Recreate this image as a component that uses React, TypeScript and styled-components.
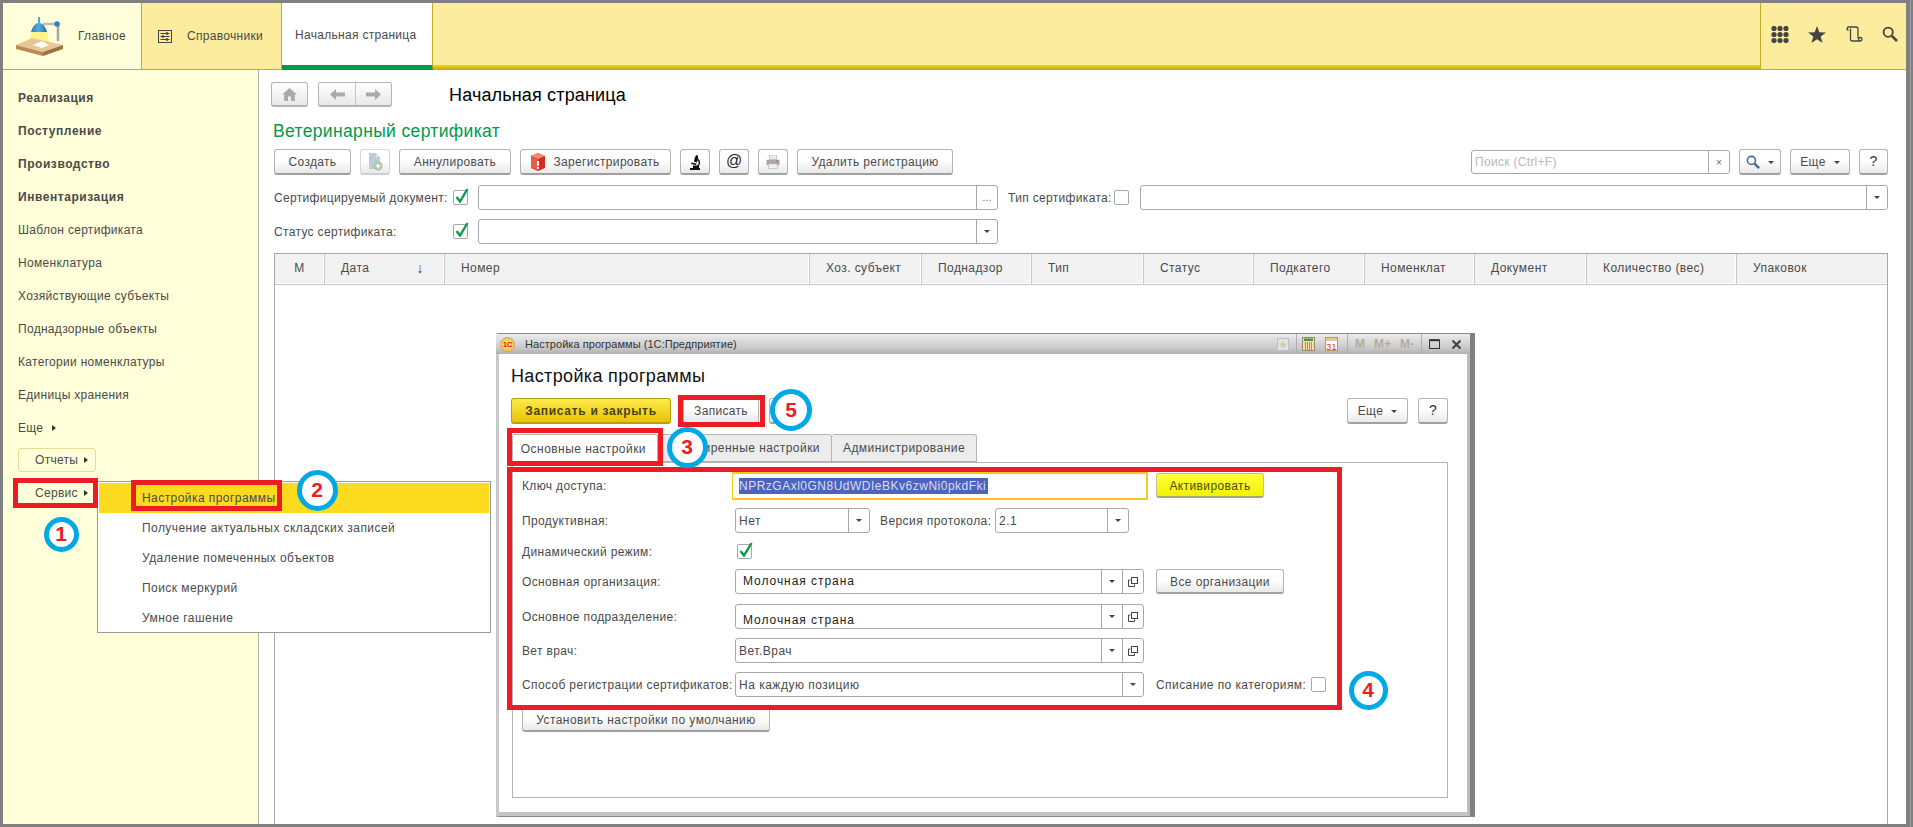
import React from "react";
import styled, { createGlobalStyle } from "styled-components";

const GlobalStyle = createGlobalStyle`
  html, body {
    margin: 0;
    padding: 0;
    background: #808080;
  }
  body {
    font-family: "Liberation Sans", Arial, sans-serif;
    font-size: 12px;
    letter-spacing: 0.3px;
    color: #4a4a4a;
  }
  * {
    box-sizing: border-box;
  }
`;

const Page = styled.div`
  position: relative;
  width: 1913px;
  height: 827px;
  padding: 3px 7px 3px 3px;
  background: #808080;
  display: flex;
  flex-direction: column;
  overflow: hidden;
  &::after {
    content: "";
    position: absolute;
    top: 0;
    bottom: 0;
    right: 2px;
    width: 1px;
    background: #a0a0a0;
  }
`;

/* top bar */
const Header = styled.header`
  height: 67px;
  display: flex;
  flex: none;
  background: #fcec9e;
`;

const HomeTab = styled.div`
  width: 139px;
  display: flex;
  align-items: center;
  padding-left: 11px;
  gap: 12px;
  background: #ffffd9;
  border-right: 1px solid #c4ab24;
  border-bottom: 1px solid #c4ab24;
`;

const SectionTab = styled.div`
  width: 140px;
  display: flex;
  align-items: center;
  padding-left: 16px;
  gap: 15px;
  border-right: 1px solid #c4ab24;
  border-bottom: 1px solid #c4ab24;
`;

const ActiveTab = styled.div`
  width: 151px;
  display: flex;
  align-items: center;
  padding-left: 13px;
  background: #fff;
  border-right: 1px solid #c4ab24;
  border-bottom: 4px solid #009a4a;
  box-shadow: inset 0 -1px 0 #009a4a;
`;

const HeaderFill = styled.div`
  flex: 1;
  position: relative;
  &::after {
    content: "";
    position: absolute;
    left: 0;
    right: 0;
    bottom: 0;
    height: 5px;
    background: linear-gradient(#f0d326, #cda900);
  }
`;

const HeaderTools = styled.div`
  width: 146px;
  display: flex;
  align-items: center;
  padding: 0 8px 4px 10px;
  justify-content: space-between;
  border-left: 1px solid #c4ab24;
  border-bottom: 1px solid #c4ab24;
`;

/* left menu + main area */
const Body = styled.div`
  flex: 1;
  display: flex;
  min-height: 0;
  background: #fff;
`;

const Sidebar = styled.nav`
  width: 256px;
  flex: none;
  padding: 11px 0 0 15px;
  background: #ffffd9;
  border-right: 1px solid #b3b3a0;
  display: flex;
  flex-direction: column;
`;

const MenuLink = styled.div<{ $bold?: boolean }>`
  height: 33px;
  display: flex;
  align-items: center;
  gap: 9px;
  font-weight: ${(p) => (p.$bold ? 700 : 400)};
  letter-spacing: ${(p) => (p.$bold ? 0.55 : 0.3)}px;
`;

const ArrowRight = styled.span`
  width: 0;
  height: 0;
  border-left: 4px solid #333;
  border-top: 3px solid transparent;
  border-bottom: 3px solid transparent;
`;

const SideButton = styled.div<{ $outlined?: boolean }>`
  width: 78px;
  height: 24px;
  margin-top: ${(p) => (p.$outlined ? 4 : 9)}px;
  padding-left: 16px;
  display: flex;
  align-items: center;
  gap: 6px;
  border-radius: 3px;
  border: 1px solid ${(p) => (p.$outlined ? "#e9dc8f" : "transparent")};
`;

const Main = styled.main`
  flex: 1;
  min-width: 0;
  padding: 12px 18px 0 15px;
  display: flex;
  flex-direction: column;
`;

const NavRow = styled.div`
  height: 25px;
  margin-left: -3px;
  display: flex;
  align-items: center;
`;

const NavGroup = styled.div`
  height: 25px;
  display: flex;
  border: 1px solid #b4b4b4;
  border-bottom-width: 2px;
  border-radius: 3px;
  background: linear-gradient(#fff, #e8e8e8);
  margin-right: 10px;
`;

const NavCell = styled.div<{ $w: number }>`
  width: ${(p) => p.$w}px;
  display: flex;
  align-items: center;
  justify-content: center;
  & + & {
    border-left: 1px solid #c4c4c4;
  }
`;

const PageTitle = styled.h1`
  margin: 2px 0 0 47px;
  font-size: 18px;
  font-weight: 400;
  letter-spacing: 0.15px;
  color: #000;
`;

const Heading = styled.h2`
  margin: 14px 0 0 -1px;
  height: 20px;
  line-height: 20px;
  font-size: 17.5px;
  font-weight: 400;
  letter-spacing: 0.35px;
  color: #009a4a;
`;

const Toolbar = styled.div`
  margin-top: 8px;
  height: 26px;
  display: flex;
  gap: 9px;
`;

const Btn = styled.button<{ $w: number; $dim?: boolean }>`
  width: ${(p) => p.$w}px;
  height: 26px;
  flex: none;
  padding: 1px 0 0;
  display: flex;
  align-items: center;
  justify-content: center;
  gap: 8px;
  font: inherit;
  letter-spacing: 0.32px;
  color: #4a4a4a;
  border: 1px solid ${(p) => (p.$dim ? "#d8d8d8" : "#b4b4b4")};
  border-bottom: 2px solid ${(p) => (p.$dim ? "#cfcfcf" : "#a0a0a0")};
  border-radius: 3px;
  background: linear-gradient(#fff 45%, #e9e9e9);
`;

const AtGlyph = styled.span`
  font-family: "Liberation Sans", Arial, sans-serif;
  font-size: 16px;
  letter-spacing: 0;
  color: #222;
  margin-top: -3px;
`;

const HelpGlyph = styled.span`
  font-size: 14px;
  color: #333;
  margin-top: -2px;
`;

const PrimaryBtn = styled(Btn)`
  font-weight: 700;
  letter-spacing: 0.7px;
  color: #4a4410;
  border-color: #b59f10;
  background: linear-gradient(#ffe94a, #e8c406);
`;

const ActivateBtn = styled(Btn)`
  height: 25px;
  margin-top: 1px;
  margin-left: 8px;
  letter-spacing: 0.4px;
  color: #4b4b10;
  background: linear-gradient(#ffff40, #f2f200);
  border-color: #c4c090;
  border-bottom-color: #a8a470;
`;

const FormBtn = styled(Btn)`
  height: 25px;
  margin-left: 12px;
  letter-spacing: 0.4px;
`;

const DefaultsBtn = styled(Btn)`
  height: 25px;
  letter-spacing: 0.42px;
`;

const PushRight = styled.div`
  margin-left: auto;
`;

const Field = styled.div<{ $w?: number; $h?: number }>`
  ${(p) => (p.$w ? `width: ${p.$w}px; flex: none;` : "flex: 1;")}
  height: ${(p) => p.$h ?? 25}px;
  display: flex;
  align-items: stretch;
  background: #fff;
  border: 1px solid #a8a8a8;
  border-radius: 3px;
`;

const SearchField = styled(Field)`
  margin-top: 1px;
`;

const FieldText = styled.div<{ $faint?: boolean }>`
  flex: 1;
  min-width: 0;
  padding-left: 3px;
  display: flex;
  align-items: center;
  color: ${(p) => (p.$faint ? "#b8b8b8" : "#4a4a4a")};
`;

const FormValue = styled(FieldText)`
  letter-spacing: 0.5px;
`;

const OrgText = styled.div<{ $drop: number }>`
  flex: 1;
  padding: ${(p) => (p.$drop > 0 ? "7px" : "0")} 0 ${(p) => (p.$drop < 0 ? "2px" : "0")} 7px;
  display: flex;
  align-items: center;
  color: #222;
  letter-spacing: 0.95px;
`;

const FieldBtn = styled.div`
  width: 21px;
  flex: none;
  display: flex;
  align-items: center;
  justify-content: center;
  border-left: 1px solid #a8a8a8;
  font-size: 10px;
  color: #666;
`;

const ArrowDown = styled.span`
  width: 0;
  height: 0;
  border-top: 3px solid #444;
  border-left: 3px solid transparent;
  border-right: 3px solid transparent;
`;

const FilterRow = styled.div`
  margin-top: 9px;
  height: 25px;
  display: flex;
  align-items: center;
`;

const FirstFilterRow = styled(FilterRow)`
  margin-top: 10px;
`;

const FilterLabel = styled.span<{ $w: number; $ml?: number }>`
  width: ${(p) => p.$w}px;
  margin-left: ${(p) => p.$ml ?? 0}px;
  flex: none;
  white-space: nowrap;
  letter-spacing: 0.33px;
`;

const CheckBox = styled.span<{ $gap?: number }>`
  position: relative;
  width: 15px;
  height: 15px;
  flex: none;
  margin-right: ${(p) => p.$gap ?? 0}px;
  background: #fff;
  border: 1px solid #a8a8a8;
  border-radius: 2px;
  & svg {
    position: absolute;
    left: 1px;
    top: -3px;
  }
`;

const TableBox = styled.section`
  margin-top: 9px;
  flex: 1;
  border: 1px solid #a8a8a8;
  border-bottom: 0;
`;

const TableHead = styled.div`
  height: 31px;
  display: grid;
  grid-template-columns: 50px 120px 365px 112px 110px 112px 110px 111px 110px 112px 150px 1fr;
  background: #f2f2f2;
  border-bottom: 1px solid #c8c8c8;
  box-shadow: inset 0 -1px 0 #fff;
`;

const HeadCell = styled.div<{ $center?: boolean }>`
  display: flex;
  align-items: center;
  justify-content: ${(p) => (p.$center ? "center" : "space-between")};
  padding: 0 ${(p) => (p.$center ? 0 : 20)}px 2px ${(p) => (p.$center ? 0 : 16)}px;
  border-right: 1px solid #c8c8c8;
  box-shadow: inset -1px 0 0 #fff;
  letter-spacing: 0.42px;
  white-space: nowrap;
  overflow: hidden;
  &:last-child {
    border-right: 0;
    box-shadow: none;
  }
`;

const SortGlyph = styled.span`
  font-size: 14px;
  color: #444;
`;

/* popup under the sidebar button */
const PopupMenu = styled.div`
  position: absolute;
  left: 97px;
  top: 481px;
  width: 394px;
  height: 152px;
  padding: 1px;
  background: #fff;
  border: 1px solid #9a9a9a;
  z-index: 2;
`;

const PopupItem = styled.div<{ $active?: boolean }>`
  height: 30px;
  padding-left: 43px;
  display: flex;
  align-items: center;
  letter-spacing: 0.44px;
  background: ${(p) => (p.$active ? "#fbda1f" : "transparent")};
`;

/* settings window */
const Dialog = styled.div`
  position: absolute;
  left: 496px;
  top: 333px;
  width: 979px;
  height: 484px;
  display: flex;
  flex-direction: column;
  border-top: 1px solid #8a8a8a;
  border-left: 3px solid #c8c8c8;
  border-right: 5px solid #808080;
  border-bottom: 1px solid #8a8a8a;
  background: #c8c8c8;
  z-index: 1;
`;

const TitleBar = styled.div`
  height: 20px;
  flex: none;
  display: flex;
  align-items: center;
  padding-right: 2px;
  margin-left: -3px;
  background: linear-gradient(#ececec, #c9c9c9 70%, #b0b0b0);
`;

const AppBadge = styled.span`
  width: 15px;
  height: 15px;
  margin-left: 4px;
  flex: none;
  border-radius: 50%;
  display: flex;
  align-items: center;
  justify-content: center;
  font-size: 8px;
  font-weight: 700;
  letter-spacing: -0.3px;
  color: #d8231a;
  background: radial-gradient(#ffe680, #f5b840);
  border: 1px solid #d0a060;
`;

const TitleText = styled.span`
  margin-left: 10px;
  color: #333;
  font-size: 11px;
  letter-spacing: 0.05px;
`;

const TitleTools = styled.div`
  margin-left: auto;
  display: flex;
  align-items: center;
  height: 20px;
`;

const ToolGroup = styled.div<{ $gap: number }>`
  display: flex;
  align-items: center;
  gap: ${(p) => p.$gap}px;
  padding: 0 7px;
  height: 100%;
  border-left: 1px solid #b0b0b0;
  &:first-child {
    border-left: 0;
  }
`;

const CalcGroup = styled(ToolGroup)`
  padding: 0 9px 0 5px;
`;

const MemoryKey = styled.span`
  font-weight: 700;
  font-size: 12px;
  letter-spacing: 0;
  color: #b5aba0;
`;

const DialogBody = styled.div`
  flex: 1;
  min-height: 0;
  padding: 12px 19px 14px 12px;
  display: flex;
  flex-direction: column;
  background: #fff;
  border-right: 3px solid #bcbcbc;
  border-bottom: 4px solid #c4c4c4;
`;

const DialogTitle = styled.h2`
  margin: 0;
  height: 20px;
  line-height: 20px;
  font-size: 18px;
  font-weight: 400;
  letter-spacing: 0.35px;
  color: #111;
`;

const DialogBar = styled.div`
  margin-top: 12px;
  height: 26px;
  display: flex;
  gap: 10px;
`;

const SaveClose = styled(PrimaryBtn)`
  margin-right: 2px;
`;

const Tabs = styled.div`
  margin: 10px 0 0 1px;
  height: 28px;
  display: flex;
  flex: none;
`;

const FormTab = styled.div<{ $w: number; $active?: boolean }>`
  position: relative;
  width: ${(p) => p.$w}px;
  height: ${(p) => (p.$active ? 29 : 28)}px;
  display: flex;
  align-items: center;
  justify-content: flex-end;
  padding-right: 11px;
  letter-spacing: 0.45px;
  border: 1px solid #b4b4b4;
  border-left-width: ${(p) => (p.$active ? 1 : 0)}px;
  border-bottom-width: ${(p) => (p.$active ? 0 : 1)}px;
  border-radius: 3px 3px 0 0;
  background: ${(p) => (p.$active ? "#fff" : "#ececec")};
  z-index: ${(p) => (p.$active ? 1 : 0)};
`;

const Panel = styled.div`
  flex: 1;
  margin-left: 1px;
  padding: 9px 0 0 9px;
  border: 1px solid #b4b4b4;
`;

const FormRow = styled.div<{ $mt?: number }>`
  display: flex;
  align-items: center;
  margin-top: ${(p) => p.$mt ?? 0}px;
  min-height: 25px;
`;

const KeyRow = styled(FormRow)`
  align-items: flex-start;
`;

const FormLabel = styled.span<{ $w?: number }>`
  width: ${(p) => p.$w ?? 213}px;
  flex: none;
  white-space: nowrap;
  letter-spacing: 0.36px;
`;

const KeyLabel = styled(FormLabel)`
  width: 210px;
  line-height: 28px;
`;

const KeyField = styled.div`
  width: 416px;
  height: 28px;
  flex: none;
  padding-left: 6px;
  display: flex;
  align-items: center;
  border: 1px solid #f7c81a;
  border-width: 2px 2px 2px 1px;
`;

const SelectedText = styled.span`
  width: 249px;
  height: 16px;
  line-height: 16px;
  overflow: hidden;
  white-space: nowrap;
  color: #d8defa;
  background: #4d64bb;
  letter-spacing: 0.5px;
`;

const InlineLabel = styled.span`
  margin: 0 4px 0 10px;
  width: 111px;
  flex: none;
  white-space: nowrap;
  letter-spacing: 0.42px;
`;

const WriteOffLabel = styled.span`
  margin: 0 5px 0 12px;
  white-space: nowrap;
  letter-spacing: 0.42px;
`;

const DynCheck = styled(CheckBox)`
  margin-left: 2px;
`;

/* annotations painted over the screenshot */
const Frame = styled.div<{ $x: number; $y: number; $w: number; $h: number }>`
  position: absolute;
  left: ${(p) => p.$x}px;
  top: ${(p) => p.$y}px;
  width: ${(p) => p.$w}px;
  height: ${(p) => p.$h}px;
  border: 5px solid #ed1c24;
  pointer-events: none;
  z-index: 3;
`;

const Step = styled.div<{ $x: number; $y: number; $d: number }>`
  position: absolute;
  left: ${(p) => p.$x - p.$d / 2}px;
  top: ${(p) => p.$y - p.$d / 2}px;
  width: ${(p) => p.$d}px;
  height: ${(p) => p.$d}px;
  border: 5px solid #00a8e8;
  border-radius: 50%;
  background: #fff;
  display: flex;
  align-items: center;
  justify-content: center;
  font-size: 21px;
  font-weight: 700;
  letter-spacing: 0;
  color: #ed1c24;
  z-index: 4;
`;

const Logo = () => (
  <svg width="52" height="42" viewBox="14 12 52 42">
    <defs>
      <linearGradient id="shade" x1="0" x2="1" y1="0" y2="0">
        <stop offset="0" stopColor="#2f7fb5" />
        <stop offset="0.5" stopColor="#55aee0" />
        <stop offset="1" stopColor="#1f6a9e" />
      </linearGradient>
    </defs>
    <polygon points="31,29 47,29 49,39 29,39" fill="#fff48a" />
    <polygon points="16,42 32,35 63,42 43,49" fill="#e7c795" />
    <polygon points="16,42 43,49 43,53 16,46" fill="#b98a55" />
    <polygon points="43,49 63,42 63,46 43,53" fill="#9c7243" />
    <polygon points="33,42 42,38 49,42 42,45" fill="#fdfdf6" />
    <path d="M43 21 H57" stroke="#bdbdbd" strokeWidth="2.4" fill="none" />
    <path d="M58 21 V38" stroke="#a8a8a8" strokeWidth="2.6" fill="none" />
    <path d="M38 14h2v6c3 .5 5.5 4 7 9H31c1.5-5 4-8.5 7-9z" fill="url(#shade)" />
    <circle cx="57" cy="21" r="2.8" fill="#2f86bb" />
  </svg>
);

const CatalogIcon = () => (
  <svg width="14" height="13" viewBox="0 0 14 13" fill="none" stroke="#444">
    <rect x="0.5" y="0.5" width="13" height="12" />
    <path d="M2.5 3.5H11.5M2.5 6.5H11.5M2.5 9.5H11.5" />
    <path d="M9 2V5M5 5V8M9 8V11" strokeWidth="1.4" />
  </svg>
);

const GridIcon = () => (
  <svg width="18" height="17" viewBox="0 0 18 17" fill="#444">
    {[3, 9, 15].map((x) =>
      [2.5, 8.5, 14.5].map((y) => <circle key={`${x}-${y}`} cx={x} cy={y} r="2.6" />)
    )}
  </svg>
);

const StarIcon = () => (
  <svg width="18" height="17" viewBox="0 0 18 17" fill="#444">
    <polygon points="9,0 11.3,6.2 18,6.4 12.7,10.5 14.6,17 9,13.2 3.4,17 5.3,10.5 0,6.4 6.7,6.2" />
  </svg>
);

const ScrollIcon = () => (
  <svg width="17" height="16" viewBox="0 0 17 16" fill="none" stroke="#444" strokeWidth="1.3">
    <path d="M2.5 4H1.8C.8 4 .7 1 2.5 1H10c1.4 0 2 .8 2 2V12.5" />
    <path d="M4.5 2.5V13c0 1.2.8 2 2 2H14.5" />
    <circle cx="14.3" cy="13.2" r="1.7" />
  </svg>
);

const SearchIcon = ({ color = "#444", size = 16 }: { color?: string; size?: number }) => (
  <svg width={size} height={size} viewBox="0 0 16 16" fill="none" stroke={color}>
    <circle cx="6.2" cy="6.2" r="4.6" strokeWidth="1.8" />
    <path d="M9.8 9.8L15 15" strokeWidth="2.6" />
  </svg>
);

const HomeIcon = () => (
  <svg width="15" height="13" viewBox="0 0 15 13" fill="#a9a9a9">
    <polygon points="7.5,0 15,6.5 12.8,6.5 12.8,13 9,13 9,8.5 6,8.5 6,13 2.2,13 2.2,6.5 0,6.5" />
  </svg>
);

const NavArrow = ({ flip }: { flip?: boolean }) => (
  <svg width="15" height="11" viewBox="0 0 15 11" fill="#a9a9a9" transform={flip ? "scale(-1 1)" : undefined}>
    <polygon points="0,5.5 6,0 6,3.5 15,3.5 15,7.5 6,7.5 6,11" />
  </svg>
);

const DocAddIcon = () => (
  <svg width="15" height="18" viewBox="0 0 15 18">
    <path d="M1 0H8L12 4V16H1Z" fill="#bcccd8" />
    <path d="M8 0L12 4H8Z" fill="#e4e4e4" />
    <circle cx="10" cy="13" r="4.6" fill="#a7c8a3" />
    <path d="M10 10.5V15.5M7.5 13H12.5" stroke="#fff" strokeWidth="1.6" />
  </svg>
);

const RedCubeIcon = () => (
  <svg width="14" height="18" viewBox="0 0 14 18">
    <polygon points="7,0 14,3 14,15 7,18 0,15 0,3" fill="#d92a20" />
    <polygon points="7,0 14,3 7,6 0,3" fill="#f08a78" />
    <polygon points="0,3 7,6 7,18 0,15" fill="#e85a48" />
    <rect x="6" y="8" width="2" height="5" fill="#fff" />
    <rect x="6" y="14" width="2" height="2" fill="#fff" />
  </svg>
);

const MicroscopeIcon = () => (
  <svg width="12" height="15" viewBox="0 0 12 15" fill="#111">
    <rect x="1" y="13" width="10" height="2" />
    <rect x="4" y="10.5" width="6" height="2.5" />
    <polygon points="7,0 9,0.8 9.2,3 8,7.5 4.8,6.5 6,2.5" />
    <polygon points="2.5,7.5 7.5,8.5 7,10 2,9" />
    <path d="M9 4.5c2 2 2 5-.5 6.5" stroke="#111" strokeWidth="1.4" fill="none" />
  </svg>
);

const PrinterIcon = () => (
  <svg width="14" height="14" viewBox="0 0 15 15">
    <rect x="3.5" y="0" width="8" height="5" fill="#ececec" stroke="#a8a8a8" strokeWidth="0.6" />
    <rect x="0.5" y="5" width="14" height="6" rx="1" fill="#a8a8a8" />
    <rect x="11" y="6" width="2" height="1.5" fill="#e45a3a" />
    <rect x="3" y="9.5" width="9" height="5" fill="#f2f2f2" stroke="#a8a8a8" strokeWidth="0.6" />
  </svg>
);

const CheckMark = () => (
  <svg width="14" height="15" viewBox="0 0 14 15" fill="none">
    <path d="M1.5 9L5 13.5L12.5 1" stroke="#0a9a4a" strokeWidth="2.4" />
  </svg>
);

const CopyIcon = () => (
  <svg width="10" height="10" viewBox="0 0 10 10" fill="none" stroke="#444">
    <rect x="3.5" y="0.5" width="6" height="6" />
    <path d="M2.5 3H0.5V9.5H6.5V7.5" />
  </svg>
);

const FavDocIcon = () => (
  <svg width="12" height="13" viewBox="0 0 12 13">
    <rect x="0.5" y="0.5" width="11" height="12" fill="#dfe4e8" stroke="#b8c2cc" />
    <polygon points="6,2.5 7.2,5.4 10,5.6 7.8,7.5 8.6,10.4 6,8.8 3.4,10.4 4.2,7.5 2,5.6 4.8,5.4" fill="#d6c89a" />
  </svg>
);

const CalcIcon = () => (
  <svg width="13" height="14" viewBox="0 0 13 14">
    <rect x="0.5" y="0.5" width="12" height="13" fill="#f3dcb0" stroke="#9a8a60" />
    <rect x="2" y="1.5" width="9" height="2.5" fill="#3e9a4a" />
    <path d="M3 6H10M3 8H10M3 10H10M3 12H10" stroke="#4a4a4a" strokeDasharray="1 1" />
  </svg>
);

const CalendarIcon = () => (
  <svg width="13" height="14" viewBox="0 0 13 14">
    <rect x="0.5" y="0.5" width="12" height="13" fill="#fff" stroke="#b09a70" />
    <rect x="1" y="1" width="11" height="3" fill="#e8c888" />
    <text x="6.5" y="12.5" textAnchor="middle" fontSize="9" fill="#e0301e" fontFamily="Liberation Sans">31</text>
  </svg>
);

const MaximizeIcon = () => (
  <svg width="11" height="10" viewBox="0 0 11 10" fill="none" stroke="#333">
    <rect x="0.5" y="1" width="10" height="8.5" />
    <path d="M0.5 1.2H10.5" strokeWidth="2" />
  </svg>
);

const CloseIcon = () => (
  <svg width="9" height="9" viewBox="0 0 9 9" fill="none" stroke="#444" strokeWidth="2.2">
    <path d="M0.5 0.5L8.5 8.5M8.5 0.5L0.5 8.5" />
  </svg>
);

const columns = [
  "Дата",
  "Номер",
  "Хоз. субъект",
  "Поднадзор",
  "Тип",
  "Статус",
  "Подкатего",
  "Номенклат",
  "Документ",
  "Количество (вес)",
  "Упаковок",
];

const sideLinks = [
  { label: "Реализация", bold: true },
  { label: "Поступление", bold: true },
  { label: "Производство", bold: true },
  { label: "Инвентаризация", bold: true },
  { label: "Шаблон сертификата" },
  { label: "Номенклатура" },
  { label: "Хозяйствующие субъекты" },
  { label: "Поднадзорные объекты" },
  { label: "Категории номенклатуры" },
  { label: "Единицы хранения" },
];

const popupItems = [
  "Настройка программы",
  "Получение актуальных складских записей",
  "Удаление помеченных объектов",
  "Поиск меркурий",
  "Умное гашение",
];

export default function App() {
  return (
    <>
      <GlobalStyle />
      <Page>
        <Header>
          <HomeTab>
            <Logo />
            Главное
          </HomeTab>
          <SectionTab>
            <CatalogIcon />
            Справочники
          </SectionTab>
          <ActiveTab>Начальная страница</ActiveTab>
          <HeaderFill />
          <HeaderTools>
            <GridIcon />
            <StarIcon />
            <ScrollIcon />
            <SearchIcon />
          </HeaderTools>
        </Header>

        <Body>
          <Sidebar>
            {sideLinks.map((l) => (
              <MenuLink key={l.label} $bold={l.bold}>
                {l.label}
              </MenuLink>
            ))}
            <MenuLink>
              Еще <ArrowRight />
            </MenuLink>
            <SideButton $outlined>
              Отчеты <ArrowRight />
            </SideButton>
            <SideButton>
              Сервис <ArrowRight />
            </SideButton>
          </Sidebar>

          <Main>
            <NavRow>
              <NavGroup>
                <NavCell $w={35}>
                  <HomeIcon />
                </NavCell>
              </NavGroup>
              <NavGroup>
                <NavCell $w={36}>
                  <NavArrow />
                </NavCell>
                <NavCell $w={36}>
                  <NavArrow flip />
                </NavCell>
              </NavGroup>
              <PageTitle>Начальная страница</PageTitle>
            </NavRow>

            <Heading>Ветеринарный сертификат</Heading>

            <Toolbar>
              <Btn $w={77}>Создать</Btn>
              <Btn $w={30} $dim>
                <DocAddIcon />
              </Btn>
              <Btn $w={112}>Аннулировать</Btn>
              <Btn $w={151}>
                <RedCubeIcon />
                Зарегистрировать
              </Btn>
              <Btn $w={30}>
                <MicroscopeIcon />
              </Btn>
              <Btn $w={30}>
                <AtGlyph>@</AtGlyph>
              </Btn>
              <Btn $w={30}>
                <PrinterIcon />
              </Btn>
              <Btn $w={156}>Удалить регистрацию</Btn>
              <PushRight />
              <SearchField $w={259} $h={24}>
                <FieldText $faint>Поиск (Ctrl+F)</FieldText>
                <FieldBtn>×</FieldBtn>
              </SearchField>
              <Btn $w={42}>
                <SearchIcon color="#3d6a9c" size={14} />
                <ArrowDown />
              </Btn>
              <Btn $w={60}>
                Еще <ArrowDown />
              </Btn>
              <Btn $w={29}>
                <HelpGlyph>?</HelpGlyph>
              </Btn>
            </Toolbar>

            <FirstFilterRow>
              <FilterLabel $w={179}>Сертифицируемый документ:</FilterLabel>
              <CheckBox $gap={10}>
                <CheckMark />
              </CheckBox>
              <Field $w={520}>
                <FieldText />
                <FieldBtn>...</FieldBtn>
              </Field>
              <FilterLabel $w={106} $ml={10}>
                Тип сертификата:
              </FilterLabel>
              <CheckBox $gap={11} />
              <Field>
                <FieldText />
                <FieldBtn>
                  <ArrowDown />
                </FieldBtn>
              </Field>
            </FirstFilterRow>

            <FilterRow>
              <FilterLabel $w={179}>Статус сертификата:</FilterLabel>
              <CheckBox $gap={10}>
                <CheckMark />
              </CheckBox>
              <Field $w={520}>
                <FieldText />
                <FieldBtn>
                  <ArrowDown />
                </FieldBtn>
              </Field>
            </FilterRow>

            <TableBox>
              <TableHead>
                <HeadCell $center>М</HeadCell>
                {columns.map((c) => (
                  <HeadCell key={c}>
                    {c}
                    {c === "Дата" && <SortGlyph>↓</SortGlyph>}
                  </HeadCell>
                ))}
              </TableHead>
            </TableBox>
          </Main>
        </Body>

        <PopupMenu>
          {popupItems.map((item, i) => (
            <PopupItem key={item} $active={i === 0}>
              {item}
            </PopupItem>
          ))}
        </PopupMenu>

        <Dialog>
          <TitleBar>
            <AppBadge>1С</AppBadge>
            <TitleText>Настройка программы (1С:Предприятие)</TitleText>
            <TitleTools>
              <ToolGroup $gap={0}>
                <FavDocIcon />
              </ToolGroup>
              <CalcGroup $gap={10}>
                <CalcIcon />
                <CalendarIcon />
              </CalcGroup>
              <ToolGroup $gap={9}>
                <MemoryKey>M</MemoryKey>
                <MemoryKey>M+</MemoryKey>
                <MemoryKey>M-</MemoryKey>
              </ToolGroup>
              <ToolGroup $gap={12}>
                <MaximizeIcon />
                <CloseIcon />
              </ToolGroup>
            </TitleTools>
          </TitleBar>

          <DialogBody>
            <DialogTitle>Настройка программы</DialogTitle>
            <DialogBar>
              <SaveClose $w={160}>Записать и закрыть</SaveClose>
              <Btn $w={76}>Записать</Btn>
              <Btn $w={30} />
              <PushRight />
              <Btn $w={61}>
                Еще <ArrowDown />
              </Btn>
              <Btn $w={30}>
                <HelpGlyph>?</HelpGlyph>
              </Btn>
            </DialogBar>

            <Tabs>
              <FormTab $w={146} $active>
                Основные настройки
              </FormTab>
              <FormTab $w={174}>Расширенные настройки</FormTab>
              <FormTab $w={145}>Администрирование</FormTab>
            </Tabs>

            <Panel>
              <KeyRow>
                <KeyLabel>Ключ доступа:</KeyLabel>
                <KeyField>
                  <SelectedText>NPRzGAxl0GN8UdWDIeBKv6zwNi0pkdFki</SelectedText>
                </KeyField>
                <ActivateBtn $w={108}>Активировать</ActivateBtn>
              </KeyRow>

              <FormRow $mt={8}>
                <FormLabel>Продуктивная:</FormLabel>
                <Field $w={135}>
                  <FormValue>Нет</FormValue>
                  <FieldBtn>
                    <ArrowDown />
                  </FieldBtn>
                </Field>
                <InlineLabel>Версия протокола:</InlineLabel>
                <Field $w={134}>
                  <FormValue>2.1</FormValue>
                  <FieldBtn>
                    <ArrowDown />
                  </FieldBtn>
                </Field>
              </FormRow>

              <FormRow $mt={6}>
                <FormLabel>Динамический режим:</FormLabel>
                <DynCheck>
                  <CheckMark />
                </DynCheck>
              </FormRow>

              <FormRow $mt={5}>
                <FormLabel>Основная организация:</FormLabel>
                <Field $w={409}>
                  <OrgText $drop={-1}>Молочная страна</OrgText>
                  <FieldBtn>
                    <ArrowDown />
                  </FieldBtn>
                  <FieldBtn>
                    <CopyIcon />
                  </FieldBtn>
                </Field>
                <FormBtn $w={128}>Все организации</FormBtn>
              </FormRow>

              <FormRow $mt={10}>
                <FormLabel>Основное подразделение:</FormLabel>
                <Field $w={409}>
                  <OrgText $drop={1}>Молочная страна</OrgText>
                  <FieldBtn>
                    <ArrowDown />
                  </FieldBtn>
                  <FieldBtn>
                    <CopyIcon />
                  </FieldBtn>
                </Field>
              </FormRow>

              <FormRow $mt={9}>
                <FormLabel>Вет врач:</FormLabel>
                <Field $w={409}>
                  <FormValue>Вет.Врач</FormValue>
                  <FieldBtn>
                    <ArrowDown />
                  </FieldBtn>
                  <FieldBtn>
                    <CopyIcon />
                  </FieldBtn>
                </Field>
              </FormRow>

              <FormRow $mt={9}>
                <FormLabel>Способ регистрации сертификатов:</FormLabel>
                <Field $w={409}>
                  <FormValue>На каждую позицию</FormValue>
                  <FieldBtn>
                    <ArrowDown />
                  </FieldBtn>
                </Field>
                <WriteOffLabel>Списание по категориям:</WriteOffLabel>
                <CheckBox />
              </FormRow>

              <FormRow $mt={10}>
                <DefaultsBtn $w={248}>Установить настройки по умолчанию</DefaultsBtn>
              </FormRow>
            </Panel>
          </DialogBody>
        </Dialog>

        <Frame $x={13} $y={478} $w={85} $h={30} />
        <Frame $x={131} $y={480} $w={151} $h={31} />
        <Frame $x={507} $y={428} $w={156} $h={38} />
        <Frame $x={507} $y={467} $w={835} $h={243} />
        <Frame $x={678} $y={395} $w={87} $h={32} />
        <Step $x={61} $y={534} $d={35}>1</Step>
        <Step $x={317} $y={490} $d={41}>2</Step>
        <Step $x={687} $y={447} $d={41}>3</Step>
        <Step $x={1368} $y={690} $d={39}>4</Step>
        <Step $x={791} $y={410} $d={42}>5</Step>
      </Page>
    </>
  );
}
